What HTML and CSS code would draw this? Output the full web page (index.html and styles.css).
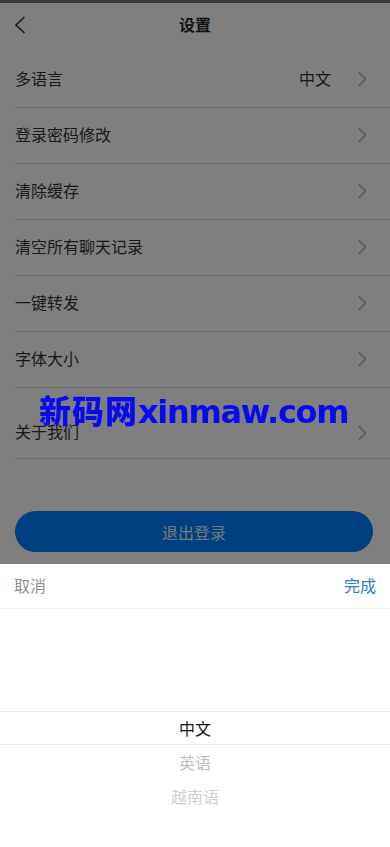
FILE: index.html
```html
<!DOCTYPE html>
<html lang="zh-CN">
<head>
<meta charset="utf-8">
<meta name="viewport" content="width=device-width, initial-scale=1">
<title>设置</title>
<link rel="stylesheet" href="styles.css">
</head>
<body>
<div class="page">
  <header class="nav">
    <span class="nav-back">
      <svg width="12" height="18" viewBox="0 0 12 18"><path d="M10.5 1 L2 9 L10.5 17" fill="none" stroke="#333" stroke-width="1.6"/></svg>
    </span>
    <h1 class="nav-title">设置</h1>
    <span class="nav-side"></span>
  </header>

  <ul class="list">
    <li class="cell"><span class="cell-label">多语言</span><span class="cell-value">中文</span><svg class="chev" width="10" height="16" viewBox="0 0 10 16"><path d="M1.5 1 L8.5 8 L1.5 15" fill="none" stroke="#b4b4b4" stroke-width="1.5"/></svg></li>
    <li class="cell"><span class="cell-label">登录密码修改</span><svg class="chev" width="10" height="16" viewBox="0 0 10 16"><path d="M1.5 1 L8.5 8 L1.5 15" fill="none" stroke="#b4b4b4" stroke-width="1.5"/></svg></li>
    <li class="cell"><span class="cell-label">清除缓存</span><svg class="chev" width="10" height="16" viewBox="0 0 10 16"><path d="M1.5 1 L8.5 8 L1.5 15" fill="none" stroke="#b4b4b4" stroke-width="1.5"/></svg></li>
    <li class="cell"><span class="cell-label">清空所有聊天记录</span><svg class="chev" width="10" height="16" viewBox="0 0 10 16"><path d="M1.5 1 L8.5 8 L1.5 15" fill="none" stroke="#b4b4b4" stroke-width="1.5"/></svg></li>
    <li class="cell"><span class="cell-label">一键转发</span><svg class="chev" width="10" height="16" viewBox="0 0 10 16"><path d="M1.5 1 L8.5 8 L1.5 15" fill="none" stroke="#b4b4b4" stroke-width="1.5"/></svg></li>
    <li class="cell"><span class="cell-label">字体大小</span><svg class="chev" width="10" height="16" viewBox="0 0 10 16"><path d="M1.5 1 L8.5 8 L1.5 15" fill="none" stroke="#b4b4b4" stroke-width="1.5"/></svg></li>
    <li class="cell cell-gap"><span class="cell-label">关于我们</span><svg class="chev" width="10" height="16" viewBox="0 0 10 16"><path d="M1.5 1 L8.5 8 L1.5 15" fill="none" stroke="#b4b4b4" stroke-width="1.5"/></svg></li>
  </ul>

  <div class="logout-wrap">
    <button class="logout" type="button">退出登录</button>
  </div>
</div>

<div class="mask"></div>

<div class="watermark"><span class="wm-cn">新码网</span><span class="wm-en">xinmaw.com</span></div>

<div class="sheet">
  <div class="toolbar">
    <span class="tb-cancel">取消</span>
    <span class="tb-confirm">完成</span>
  </div>
  <div class="columns">
    <div class="frame"></div>
    <ul class="options">
      <li class="opt opt-active">中文</li>
      <li class="opt opt-near">英语</li>
      <li class="opt opt-far">越南语</li>
    </ul>
  </div>
</div>
</body>
</html>
```

FILE: styles.css
```css
* { box-sizing: border-box; }
html, body {
  margin: 0;
  padding: 0;
}
body {
  width: 390px;
  height: 847px;
  overflow: hidden;
  background: #fff;
  font-family: "Noto Sans CJK SC", "Noto Sans", sans-serif;
  color: #333;
}
ul { list-style: none; margin: 0; padding: 0; }

.page { width: 390px; }

.nav {
  height: 52px;
  border-top: 3px solid #767676;
  padding-bottom: 8px;
  display: flex;
  align-items: center;
  padding-left: 14px;
  padding-right: 14px;
}
.nav-back, .nav-side { width: 40px; display: flex; align-items: center; }
.nav-back { padding-top: 2px; }
.nav-title {
  flex: 1;
  margin: 0;
  text-align: center;
  font-size: 16px;
  font-weight: 700;
  color: #222;
}

.list { padding-left: 15px; }
.cell {
  height: 56px;
  border-bottom: 1px solid #d6d6d6;
  display: flex;
  align-items: center;
  padding-right: 23px;
  padding-bottom: 4px;
  font-size: 16px;
  color: #333;
}
.cell .chev { margin-top: 3px; }
.cell-gap { margin-top: 16px; height: 55px; padding-bottom: 0; }
.cell-label { flex: 1; }
.cell-value { margin-right: 26px; color: #333; }
.chev { flex: none; }

.logout-wrap { padding: 52px 17px 0 15px; }
.logout {
  display: block;
  width: 100%;
  height: 41px;
  border: none;
  border-radius: 21px;
  background: #007eff;
  color: #e2f2ff;
  font-family: "Noto Sans CJK SC", sans-serif;
  font-size: 16px;
}

.mask {
  position: fixed;
  inset: 0;
  background: rgba(0, 0, 0, 0.5);
}

.watermark {
  position: fixed;
  left: 39px;
  top: 386px;
  display: flex;
  align-items: baseline;
  color: #0a0af2;
  white-space: nowrap;
  z-index: 5;
}
.wm-cn {
  font-family: "Noto Sans CJK SC", sans-serif;
  font-weight: 900;
  font-size: 32px;
  letter-spacing: 1px;
}
.wm-en {
  font-family: "DejaVu Sans", sans-serif;
  font-weight: 700;
  font-size: 32px;
  letter-spacing: -1.3px;
}

.sheet {
  position: fixed;
  left: 0;
  right: 0;
  bottom: 0;
  height: 283px;
  background: #fff;
  z-index: 4;
}
.toolbar {
  height: 45px;
  border-bottom: 1px solid #f0f0f0;
  display: flex;
  align-items: center;
  justify-content: space-between;
  padding: 0 14px 2px 14px;
  font-size: 16px;
}
.tb-cancel { color: #8f8f8f; }
.tb-confirm { color: #2a7fcc; }

.columns {
  position: relative;
  height: 238px;
  overflow: hidden;
}
.frame {
  position: absolute;
  left: 0;
  right: 0;
  top: 102px;
  height: 34px;
  border-top: 1px solid #ebebeb;
  border-bottom: 1px solid #ebebeb;
}
.options { padding-top: 102px; }
.opt {
  height: 34px;
  display: flex;
  align-items: center;
  justify-content: center;
  font-size: 16px;
}
.opt-active { color: #111; }
.opt-near { color: #bdbdbd; }
.opt-far { color: #d0d0d0; }
```
